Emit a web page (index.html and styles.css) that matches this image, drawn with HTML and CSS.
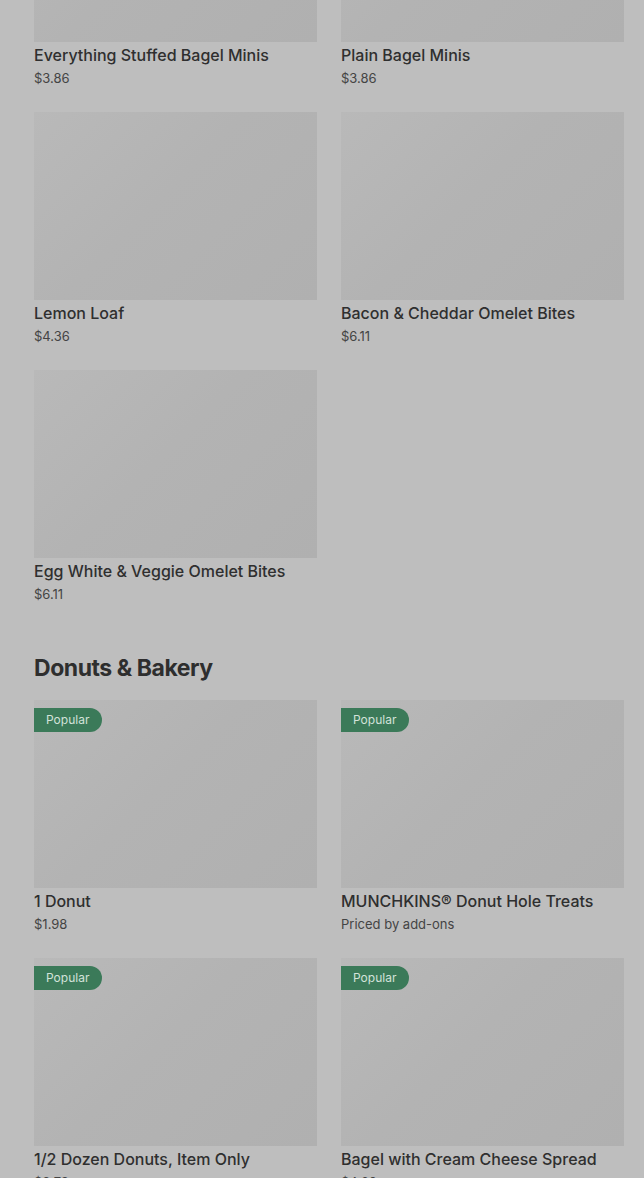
FILE: index.html
```html
<!DOCTYPE html>
<html lang="en">
<head>
<meta charset="utf-8">
<title>Menu</title>
<link rel="stylesheet" href="styles.css">
</head>
<body>
<main class="menu">
  <section class="section section-first">
    <div class="grid">
      <article class="card"><div class="thumb"></div><h3 class="name">Everything Stuffed Bagel Minis</h3><p class="price">$3.86</p></article>
      <article class="card"><div class="thumb"></div><h3 class="name">Plain Bagel Minis</h3><p class="price">$3.86</p></article>
      <article class="card"><div class="thumb"></div><h3 class="name">Lemon Loaf</h3><p class="price">$4.36</p></article>
      <article class="card"><div class="thumb"></div><h3 class="name">Bacon &amp; Cheddar Omelet Bites</h3><p class="price">$6.11</p></article>
      <article class="card"><div class="thumb"></div><h3 class="name">Egg White &amp; Veggie Omelet Bites</h3><p class="price">$6.11</p></article>
    </div>
  </section>
  <section class="section">
    <h2 class="section-title">Donuts &amp; Bakery</h2>
    <div class="grid">
      <article class="card"><div class="thumb"><span class="badge">Popular</span></div><h3 class="name">1 Donut</h3><p class="price">$1.98</p></article>
      <article class="card"><div class="thumb"><span class="badge">Popular</span></div><h3 class="name">MUNCHKINS® Donut Hole Treats</h3><p class="price">Priced by add-ons</p></article>
      <article class="card"><div class="thumb"><span class="badge">Popular</span></div><h3 class="name">1/2 Dozen Donuts, Item Only</h3><p class="price">$8.73</p></article>
      <article class="card"><div class="thumb"><span class="badge">Popular</span></div><h3 class="name">Bagel with Cream Cheese Spread</h3><p class="price">$4.60</p></article>
    </div>
  </section>
</main>
</body>
</html>
```
FILE: styles.css
```css
* { box-sizing: border-box; }
html, body {
  margin: 0;
  padding: 0;
  background: #bebebe;
  overflow: hidden;
}
body {
  font-family: Inter, "Noto Sans", "Liberation Sans", sans-serif;
  color: #2f2f2f;
}
.menu {
  padding: 0 20px 0 34px;
}
.section-first {
  margin-top: -146px;
}
.grid {
  display: grid;
  grid-template-columns: 283px 283px;
  column-gap: 24px;
}
.card {
  margin: 0;
  padding-bottom: 23px;
}
.thumb {
  position: relative;
  height: 188px;
  background: linear-gradient(135deg, #b9b9b9 0%, #b3b3b3 45%, #b0b0b0 100%);
}
.badge {
  position: absolute;
  top: 8px;
  left: 0;
  height: 24px;
  line-height: 24px;
  padding: 0 12px 0 12px;
  min-width: 68px;
  background: #3b7a59;
  color: #d3e2d9;
  font-size: 12px;
  font-weight: 400;
  border-radius: 0 12px 12px 0;
}
.name {
  margin: 0;
  padding-top: 1px;
  font-size: 16px;
  line-height: 24px;
  font-weight: 500;
  color: #2f2f2f;
}
.price {
  margin: 0;
  font-size: 13px;
  line-height: 22px;
  color: #444;
}
.section-title {
  margin: 25px 0 17px;
  font-size: 23px;
  line-height: 30px;
  font-weight: 700;
  letter-spacing: -0.45px;
  color: #2e2e2e;
}
```
